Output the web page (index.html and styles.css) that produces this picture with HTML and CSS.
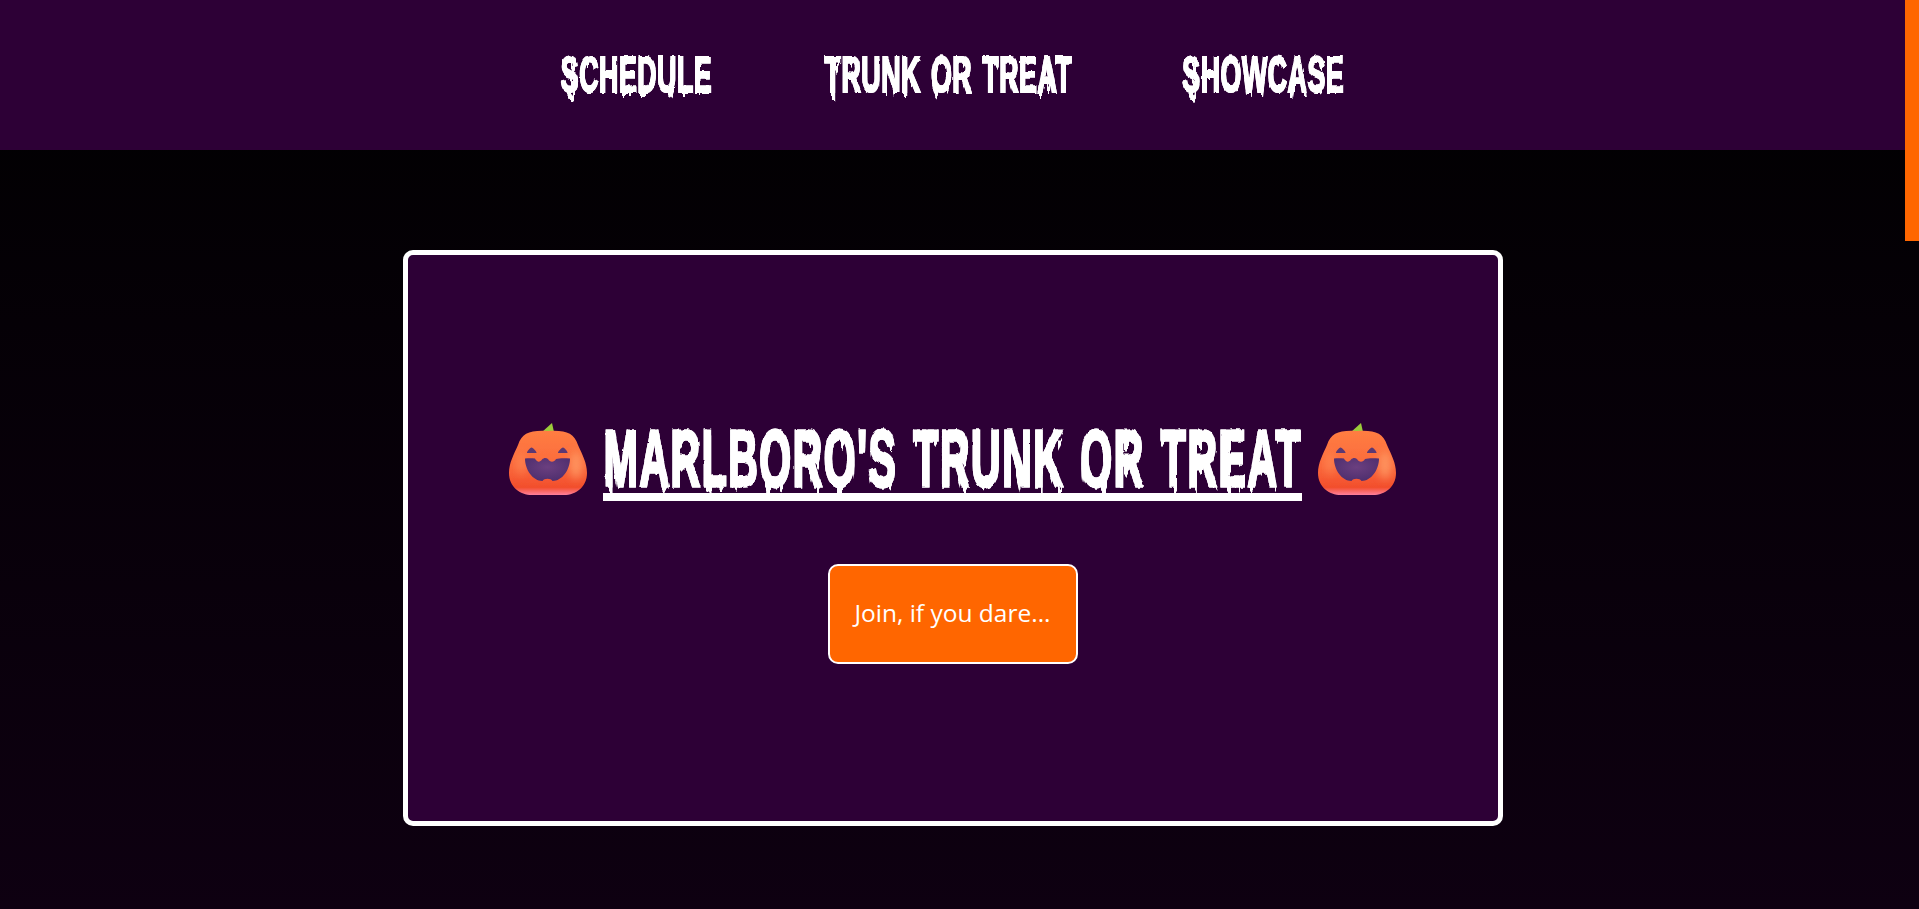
FILE: index.html
```html
<!DOCTYPE html>
<html lang="en">
<head>
    <meta charset="UTF-8">
    <meta name="viewport" content="width=device-width, initial-scale=1.0">
    <title>Marlboro's Trunk or Treat</title>
    <link rel="stylesheet" href="styles.css">
</head>
<body>

    <!-- drippy lettering + pumpkin art -->
    <svg class="defs" width="0" height="0" aria-hidden="true">
        <defs>
            <filter id="drip" x="-5%" y="-20%" width="110%" height="170%" color-interpolation-filters="sRGB">
                <feTurbulence type="fractalNoise" baseFrequency="0.07 0.003" numOctaves="2" seed="11"/>
                <feColorMatrix values="1 0 0 0 0  0 0 0 0 0.5  0 0 0 0 0  0 0 0 0 1"/>
                <feComponentTransfer result="runs">
                    <feFuncR type="table" tableValues="0 0 0 0.5 0.5 0.5 0.5 0.5"/>
                </feComponentTransfer>
                <feDisplacementMap in="SourceGraphic" in2="runs" scale="22" xChannelSelector="G" yChannelSelector="R" result="dripped"/>
                <feMerge result="wet">
                    <feMergeNode in="SourceGraphic"/>
                    <feMergeNode in="dripped"/>
                </feMerge>
                <feTurbulence type="fractalNoise" baseFrequency="0.12" numOctaves="1" seed="3" result="rough"/>
                <feDisplacementMap in="wet" in2="rough" scale="4" xChannelSelector="R" yChannelSelector="G"/>
            </filter>
            <linearGradient id="pumpkinBody" x1="0" y1="0" x2="0" y2="1">
                <stop offset="0" stop-color="#ff7d42"/>
                <stop offset="0.55" stop-color="#fb6a3c"/>
                <stop offset="0.88" stop-color="#f24e2c"/>
                <stop offset="1" stop-color="#ff7f9c"/>
            </linearGradient>
            <radialGradient id="pumpkinMouth" cx="0.5" cy="0.4" r="0.6">
                <stop offset="0" stop-color="#6b3f7f"/>
                <stop offset="1" stop-color="#4f2f6f"/>
            </radialGradient>
            <filter id="soft" x="-5%" y="-5%" width="110%" height="110%">
                <feGaussianBlur stdDeviation="0.5"/>
            </filter>
            <filter id="glow" x="-50%" y="-50%" width="200%" height="200%">
                <feGaussianBlur stdDeviation="4"/>
            </filter>
            <clipPath id="pumpkinClip">
                <path d="M40 8 C58 7 66 10 70 22 C74 31 79 40 79 50 C79 64 68 72 56 72 L24 72 C12 72 1 64 1 50 C1 40 6 31 10 22 C14 10 22 7 40 8 Z"/>
            </clipPath>
            <symbol id="pumpkin" viewBox="0 0 80 73">
                <path d="M34 9 L44 0 L46 9 Z" fill="#9ccb3b"/>
                <path filter="url(#soft)" fill="url(#pumpkinBody)" d="M40 8 C58 7 66 10 70 22 C74 31 79 40 79 50 C79 64 68 72 56 72 L24 72 C12 72 1 64 1 50 C1 40 6 31 10 22 C14 10 22 7 40 8 Z"/>
                <g clip-path="url(#pumpkinClip)">
                    <ellipse filter="url(#glow)" cx="68" cy="42" rx="6" ry="14" fill="#ffa06a" opacity="0.8"/>
                    <ellipse filter="url(#glow)" cx="13" cy="40" rx="4" ry="12" fill="#ff9560" opacity="0.6"/>
                </g>
                <path d="M23.500 24.500 C25 24.500 29 29 28.500 30 L19 30 C18.500 29 22 24.500 23.500 24.500 Z" fill="#5c3873"/>
                <path d="M55 24.500 C56.500 24.500 60 29 59.500 30 L50 30 C49.500 29 53.500 24.500 55 24.500 Z" fill="#5c3873"/>
                <path fill="url(#pumpkinMouth)" d="M17 35.500 C20 35 24 35 27 35.500 C29 39.500 32 39.500 34 36.500 C36 34.500 38 34.500 40 36 C42 39.500 46 39.500 48 36 C51 35 57 35 62 35.500 C62 47 54 58 44.500 58 C43 55 36 55 34.500 58 C25 58 17 47 17 35.500 Z"/>
            </symbol>
        </defs>
    </svg>

    <nav class="site-nav">
        <a class="drip-link drip-link-schedule" href="#schedule"><span class="drip">Schedule</span></a>
        <a class="drip-link drip-link-trunk" href="#trunk-or-treat"><span class="drip">Trunk or Treat</span></a>
        <a class="drip-link drip-link-showcase" href="#showcase"><span class="drip">Showcase</span></a>
    </nav>

    <main class="hero">
        <section class="hero-card">
            <h1 class="hero-title">
                <svg class="pumpkin" viewBox="0 0 80 73"><use href="#pumpkin"/></svg>
                <span class="hero-title-text"><span class="drip">Marlboro's Trunk or Treat</span></span>
                <svg class="pumpkin" viewBox="0 0 80 73"><use href="#pumpkin"/></svg>
            </h1>
            <a class="join-button" href="#join">Join, if you dare...</a>
        </section>
    </main>

    <!-- the browser's scrollbar, orange thumb -->
    <div class="scroll-thumb"></div>

</body>
</html>
```

FILE: styles.css
```css
body {
    margin: 0;
    padding: 0 14px 0 0;
    height: 909px;
    overflow: hidden;
    font-family: "Open Sans", sans-serif;
    color: #ffffff;
    background: linear-gradient(#000000, #0e0011);
}
.defs {
    position: absolute;
}
.scroll-thumb {
    position: fixed;
    top: 0;
    right: 0;
    width: 14px;
    height: 241px;
    background-color: #ff6600;
}

.site-nav {
    display: flex;
    justify-content: center;
    align-items: center;
    gap: 114px;
    height: 150px;
    background-color: #2d0036;
}
.drip-link {
    display: flex;
    justify-content: center;
    color: #ffffff;
    text-decoration: none;
}
.drip-link-schedule {
    width: 151px;
}
.drip-link-trunk {
    width: 243px;
}
.drip-link-showcase {
    width: 160px;
}
.drip {
    flex: none;
    display: block;
    font-family: "Liberation Sans", sans-serif;
    font-weight: 700;
    text-transform: uppercase;
    white-space: nowrap;
    filter: url(#drip);
}
.site-nav .drip {
    font-size: 50px;
    line-height: 1;
    letter-spacing: 1px;
    word-spacing: 4px;
    transform: scaleX(0.535);
    -webkit-text-stroke: 2px #ffffff;
}

.hero {
    display: flex;
    justify-content: center;
    padding-top: 100px;
}
.hero-card {
    box-sizing: border-box;
    width: 1100px;
    height: 576px;
    border: 5px solid #ffffff;
    border-radius: 10px;
    background-color: #2d0036;
    display: flex;
    flex-direction: column;
    align-items: center;
    padding-top: 168px;
}
.hero-title {
    display: flex;
    align-items: flex-start;
    gap: 15px;
    margin: 0;
    font-weight: 700;
}
.pumpkin {
    flex: none;
    width: 80px;
    height: 73px;
}
.hero-title-text {
    display: flex;
    justify-content: center;
    width: 699px;
    height: 70px;
    clip-path: inset(-20px -20px 0 -20px);
    border-bottom: 8px solid #ffffff;
}
.hero-title-text .drip {
    font-size: 80px;
    line-height: 72px;
    letter-spacing: 3px;
    word-spacing: 6px;
    transform: scaleX(0.512);
    -webkit-text-stroke: 3px #ffffff;
}

.join-button {
    box-sizing: border-box;
    display: flex;
    align-items: center;
    justify-content: center;
    width: 250px;
    height: 100px;
    margin-top: 63px;
    border: 2px solid #ffffff;
    border-radius: 10px;
    background-color: #ff6600;
    color: #ffffff;
    font-size: 24.500px;
    line-height: 1;
    padding-bottom: 2px;
    text-decoration: none;
}
```
